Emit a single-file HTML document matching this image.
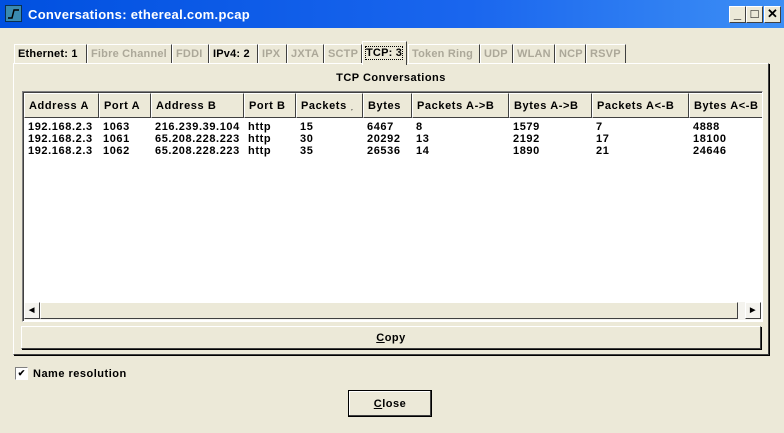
<!DOCTYPE html>
<html><head><style>
*{box-sizing:border-box;margin:0;padding:0}
body{width:784px;height:433px;background:#ece9d8;font:bold 11px "Liberation Sans",sans-serif;letter-spacing:.5px;color:#000;position:relative;overflow:hidden}
.a{position:absolute}
.title{left:0;top:0;width:784px;height:28px;background:linear-gradient(to right,#0050e0,#1a66ee 60%,#3d8ff5);}
.tt{left:28px;top:7px;color:#fff;font-size:13px;font-weight:bold;letter-spacing:.3px}
.wb{top:6px;width:17px;height:17px;background:#ece9d8;border:1px solid;border-color:#fff #404040 #404040 #fff;font-size:13px;text-align:center;line-height:14px;letter-spacing:0}
.tab{top:44px;height:20px;border:1px solid;border-color:#fff #404040 transparent #fff;border-width:1px 1px 0 1px;padding:3px 3px 0 3px;white-space:nowrap;color:#aca899;letter-spacing:.2px}
.tab.on{color:#000}
.panel{left:13px;top:63px;width:756px;height:292px;border:1px solid;border-color:#fff #404040 #404040 #fff;box-shadow:1px 1px 0 #000}
.list{left:22px;top:91px;width:741px;height:231px;background:#fff;border:1px solid;border-color:#808080 #fff #fff #808080;box-shadow:inset 1px 1px 0 #404040;overflow:hidden}
.h{top:1px;height:25px;border:1px solid;border-color:#fff #404040 #404040 #fff;background:#ece9d8;padding:6px 0 0 4px;white-space:nowrap;letter-spacing:.6px}
.c{white-space:nowrap;font-size:11px;letter-spacing:.6px}
.btn{border:1px solid;border-color:#fff #404040 #404040 #fff;box-shadow:1px 1px 0 #000;text-align:center;font-weight:bold}
</style></head><body>
<div class="a title"></div>
<div class="a" style="left:5px;top:5px;width:17px;height:17px;background:#3a8ab0;border:1px solid #0a3050"><svg width="15" height="15"><path d="M2 12 H6 L8 4 H13" stroke="#000" stroke-width="1.5" fill="none"/></svg></div>
<div class="a tt">Conversations: ethereal.com.pcap</div>
<div class="a wb" style="left:729px">_</div>
<div class="a wb" style="left:746px">□</div>
<div class="a wb" style="left:764px">✕</div>

<div class="a tab on" style="left:14px;width:73px">Ethernet: 1</div>
<div class="a tab" style="left:87px;width:85px">Fibre Channel</div>
<div class="a tab" style="left:172px;width:37px">FDDI</div>
<div class="a tab on" style="left:209px;width:49px">IPv4: 2</div>
<div class="a tab" style="left:258px;width:29px">IPX</div>
<div class="a tab" style="left:287px;width:37px">JXTA</div>
<div class="a tab" style="left:324px;width:38px">SCTP</div>
<div class="a tab" style="left:408px;width:72px">Token Ring</div>
<div class="a tab" style="left:480px;width:33px">UDP</div>
<div class="a tab" style="left:513px;width:42px">WLAN</div>
<div class="a tab" style="left:555px;width:31px">NCP</div>
<div class="a tab" style="left:586px;width:40px">RSVP</div>
<div class="a panel"></div>
<div class="a tab on" style="left:362px;top:41px;height:24px;width:45px;background:#ece9d8;border-bottom:none;padding-top:5px"><span style="outline:1px dotted #000">TCP: 3</span></div>
<div class="a" style="left:13px;top:72px;width:756px;text-align:center">TCP Conversations</div>

<div class="a list">
<div class="a h" style="left:1px;width:75px">Address A</div>
<div class="a h" style="left:76px;width:52px">Port A</div>
<div class="a h" style="left:128px;width:93px">Address B</div>
<div class="a h" style="left:221px;width:52px">Port B</div>
<div class="a h" style="left:273px;width:67px">Packets <span style="font-size:8px">˯</span></div>
<div class="a h" style="left:340px;width:49px">Bytes</div>
<div class="a h" style="left:389px;width:97px">Packets A-&gt;B</div>
<div class="a h" style="left:486px;width:83px">Bytes A-&gt;B</div>
<div class="a h" style="left:569px;width:97px">Packets A&lt;-B</div>
<div class="a h" style="left:666px;width:80px">Bytes A&lt;-B</div>
<div class="a" style="left:0;top:29px;line-height:12px">
<div class="a c" style="left:5px">192.168.2.3<br>192.168.2.3<br>192.168.2.3</div>
<div class="a c" style="left:80px">1063<br>1061<br>1062</div>
<div class="a c" style="left:132px">216.239.39.104<br>65.208.228.223<br>65.208.228.223</div>
<div class="a c" style="left:225px">http<br>http<br>http</div>
<div class="a c" style="left:277px">15<br>30<br>35</div>
<div class="a c" style="left:344px">6467<br>20292<br>26536</div>
<div class="a c" style="left:393px">8<br>13<br>14</div>
<div class="a c" style="left:490px">1579<br>2192<br>1890</div>
<div class="a c" style="left:573px">7<br>17<br>21</div>
<div class="a c" style="left:670px">4888<br>18100<br>24646</div>
</div>
<div class="a" style="left:1px;top:210px;width:737px;height:18px;background:#f4f3ee"></div>
<div class="a btn" style="left:1px;top:210px;width:16px;height:17px;box-shadow:none;font-size:7px;line-height:16px">◀</div>
<div class="a btn" style="left:17px;top:210px;width:698px;height:17px;box-shadow:none;background:#ece9d8"></div>
<div class="a btn" style="left:722px;top:210px;width:16px;height:17px;box-shadow:none;font-size:7px;line-height:16px">▶</div>
</div>

<div class="a btn" style="left:21px;top:326px;width:740px;height:23px;line-height:22px"><u>C</u>opy</div>
<div class="a" style="left:15px;top:367px;width:13px;height:13px;background:#fff;border:1px solid;border-color:#808080 #fff #fff #808080;font-size:9px;line-height:11px;text-align:center;letter-spacing:0">✔</div>
<div class="a" style="left:33px;top:368px">Name resolution</div>
<div class="a btn" style="left:348px;top:390px;width:84px;height:27px;line-height:26px;border:1px solid #000;box-shadow:inset -1px -1px 0 #404040,inset 1px 1px 0 #fff"><u>C</u>lose</div>
</body></html>
